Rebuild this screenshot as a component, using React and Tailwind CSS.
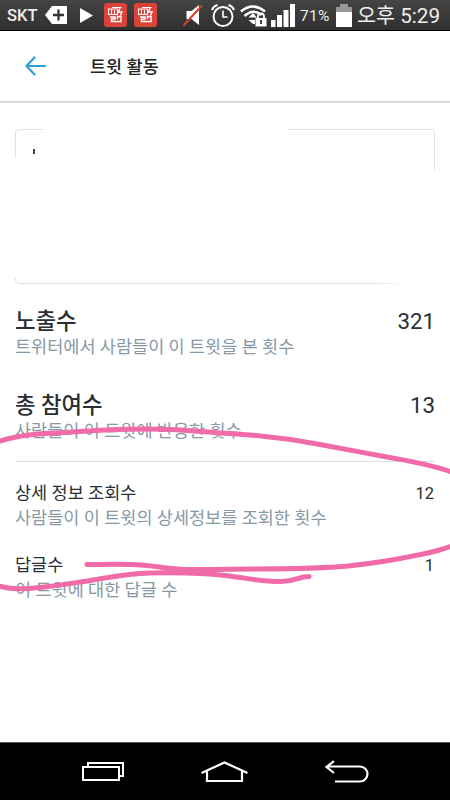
import React from "react";

const FONT = "font-['Roboto','Noto_Sans_CJK_KR',sans-serif]";

function RedAppIcon() {
  return (
    <svg className="h-6 w-[23px] shrink-0" viewBox="0 0 23 24" fill="none">
      <rect width="23" height="24" rx="3" fill="#dc4338" />
      <g stroke="#fff" strokeWidth="1.100">
        <path d="M4.500 6h9v5.500h-9zM7.500 6v5M10.500 7v4M8 4.500h9.500" />
        <path d="M16 5l-1.500 4h3.500l-1.500 3.500" strokeWidth="1.400" />
        <path d="M6 14h5v2H7.500v2.500H17v-5h-3.500v2.500" strokeWidth="1.500" />
      </g>
    </svg>
  );
}

function StatusBar() {
  return (
    <div className="flex h-[31px] shrink-0 items-center border-b border-black bg-linear-to-b from-[#444] to-[#303030] text-[#eee]">
      <span className="ml-[7px] w-[31px] shrink-0 whitespace-nowrap pt-[2px] text-[16.5px] font-medium">SKT</span>
      <svg className="ml-[7px] h-[18px] w-[22px] shrink-0" viewBox="0 0 22 18">
        <path d="M7 0h15v18H7L0 9z" fill="#fff" />
        <path d="M13.500 3.500v11M8 9h11" stroke="#333" strokeWidth="2.300" />
      </svg>
      <svg className="ml-[13px] h-[15px] w-[13px] shrink-0" viewBox="0 0 13 15">
        <path d="M0 0l13 7.500L0 15z" fill="#fff" />
      </svg>
      <div className="ml-[11px] flex shrink-0 gap-[7px]">
        <RedAppIcon />
        <RedAppIcon />
      </div>
      <svg className="ml-[26px] h-[24px] w-[20px] shrink-0" viewBox="0 0 20 24">
        <path d="M3.500 8H8.500L16 2v20l-7.500-6H3.500z" fill="#fff" />
        <path d="M0.500 22.500L19 2.500" stroke="#cf4526" strokeWidth="2" />
      </svg>
      <svg className="ml-[8px] h-[26px] w-[24px] shrink-0" viewBox="0 0 24 26" fill="none" stroke="#fff">
        <circle cx="12" cy="14.500" r="9.500" strokeWidth="1.900" />
        <path d="M12 8.500v6.500h4.500" strokeWidth="1.600" />
        <path d="M1 8Q2.500 4 6.500 3M23 8Q21.500 4 17.500 3" strokeWidth="2" />
      </svg>
      <svg className="ml-[5px] h-[24px] w-[27px] shrink-0" viewBox="0 0 27 24" fill="none">
        <g stroke="#fff" strokeWidth="2.600">
          <path d="M1 8.500Q13 -1.500 25 8.500" />
          <path d="M4.500 13Q13 5 21.500 12" />
        </g>
        <path d="M8.500 14.500l4.500-4.500 4 4.500zM8.500 17H15v4h-2z" fill="#fff" />
        <path d="M18 16v-2.500a3 3 0 0 1 6 0V16" stroke="#fff" strokeWidth="1.800" />
        <rect x="15.500" y="15" width="11" height="8.500" fill="#fff" />
        <path d="M21 17v4" stroke="#444" strokeWidth="2" />
      </svg>
      <svg className="ml-[4px] h-[23px] w-[24px] shrink-0" viewBox="0 0 24 23" fill="#fff">
        <path d="M0 16h4.500v7H0zM6 11h5v12H6zM12.500 6h5v17h-5zM19 0h5v23h-5z" />
      </svg>
      <span className="ml-[5px] w-[36px] shrink-0 whitespace-nowrap pt-[3px] text-[15.5px] tracking-[0.3px]">71%</span>
      <svg className="mt-px h-[23px] w-[16px] shrink-0" viewBox="0 0 16 23">
        <path d="M4 0h8v3h4v5H0V3h4z" fill="#999" />
        <path d="M0 8h16v15H0z" fill="#fff" />
      </svg>
      <span className="ml-[5px] shrink-0 whitespace-nowrap pt-[2px] text-[20.700px] leading-none">오후 5:29</span>
    </div>
  );
}

function Stat({ title, value, note, large }) {
  return (
    <div className="px-[15px]">
      <div className="flex h-[26px] items-center justify-between whitespace-nowrap text-[#292f33]">
        <span className={large ? "pt-px text-[22.3px] font-medium leading-none" : "text-[17.5px] leading-none"}>{title}</span>
        <span className={large ? "text-[22.3px] leading-none" : "pr-px text-[16.5px] leading-none"}>{value}</span>
      </div>
      <p className={`flex h-[25px] items-center whitespace-nowrap text-[17.5px] leading-none text-[#8899a6] ${large ? "pt-[3px]" : "pb-px"}`}>{note}</p>
    </div>
  );
}

function ErasedCard() {
  return (
    <div className="relative mx-[15px] mt-[26px] h-[155px] shrink-0 rounded-[4px] border border-[#dce4e6] pl-[17px] pt-[19px]">
      <div className="h-[5px] w-[2px] bg-[#444]" />
      <div className="absolute -top-1 left-[27px] h-3 w-[244px] bg-white" />
      <div className="absolute -left-1 top-[28px] h-[120px] w-3 bg-white" />
      <div className="absolute -right-1 top-[40px] h-[120px] w-3 bg-white" />
      <div className="absolute -bottom-1 right-0 h-3 w-[60px] bg-linear-to-r from-transparent to-white to-60%" />
    </div>
  );
}

function NavigationBar() {
  return (
    <nav className="flex h-[58px] shrink-0 items-center border-t border-[#555] bg-black">
      <svg className="ml-[81px] h-[24px] w-[45px]" viewBox="0 0 45 24" fill="none" stroke="#fff" strokeWidth="2">
        <path d="M2 7h36v13H2zM7 7V3h35v13h-4" />
      </svg>
      <svg className="ml-[74px] h-[24px] w-[49px]" viewBox="0 0 49 24" fill="none" stroke="#fff" strokeWidth="2.200">
        <path d="M1.500 13L24.500 2.500 47.500 13M7 11v10h35V11" />
      </svg>
      <svg className="ml-[75px] h-[26px] w-[46px]" viewBox="0 0 46 26" fill="none" stroke="#fff" strokeWidth="2.200">
        <path d="M10 2L2.500 8 10 14M2.500 7.500H36a7.500 7.500 0 0 1 0 15H11" />
      </svg>
    </nav>
  );
}

function PinkMarker() {
  return (
    <svg
      className="pointer-events-none absolute left-0 top-0 h-[800px] w-[450px]"
      viewBox="0 0 450 800"
      fill="none"
      stroke="#f06ba8"
      strokeWidth="5"
      strokeLinecap="round"
      strokeLinejoin="round"
    >
      <path d="M-3 442C12 437 25 434.500 45 433.500S85 431 107 430S150 428.500 170 429.500S205 432 230 433.500S290 439 320 444.500S365 453 387 457S430 464 453 472.500" />
      <path d="M453 545.500C437 552 420 555 400 558.500S360 565.500 335 567S290 569 255 569S205 570 185 569.500S155 565 130 564.500S105 564.500 87 564.500" />
      <path d="M-3 585.500C12 590 24 589 40 587.500S70 583.500 90 580.500S125 573.500 150 573S200 572.500 225 575.500S265 582 281 581.500S298 576.500 309 576.500" />
    </svg>
  );
}

export default function App() {
  return (
    <div className={`relative flex h-[800px] w-[450px] flex-col overflow-hidden bg-white ${FONT}`}>
      <StatusBar />
      <header className="flex h-[72px] shrink-0 items-center border-b-2 border-[#d9d9d9]">
        <svg className="ml-[25px] h-[20px] w-[22px]" viewBox="0 0 22 20" fill="none" stroke="#2f9fdc" strokeWidth="2.200" strokeLinecap="round" strokeLinejoin="round">
          <path d="M9.500 1.500L1.500 10l8 8.500M2 10h18" />
        </svg>
        <h1 className="ml-[43px] whitespace-nowrap pt-[4px] text-[17.5px] font-medium leading-none text-[#222]">트윗 활동</h1>
      </header>
      <main className="flex flex-1 flex-col">
        <ErasedCard />
        <div className="mt-[24px]">
          <Stat large title="노출수" value="321" note="트위터에서 사람들이 이 트윗을 본 횟수" />
        </div>
        <div className="mt-[33px]">
          <Stat large title="총 참여수" value="13" note="사람들이 이 트윗에 반응한 횟수" />
        </div>
        <hr className="mx-[15px] mt-[18px] border-[#d8e0e4]" />
        <div className="mt-[19px]">
          <Stat title="상세 정보 조회수" value="12" note="사람들이 이 트윗의 상세정보를 조회한 횟수" />
        </div>
        <div className="mt-[21px]">
          <Stat title="답글수" value="1" note="이 트윗에 대한 답글 수" />
        </div>
      </main>
      <NavigationBar />
      <PinkMarker />
    </div>
  );
}
